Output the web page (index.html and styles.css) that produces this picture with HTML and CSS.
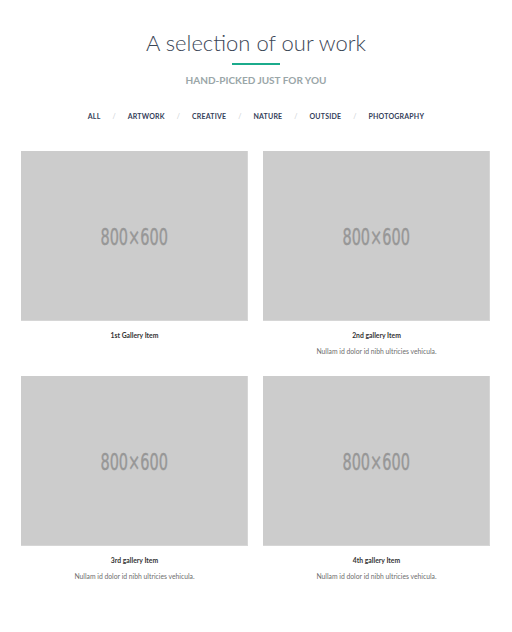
FILE: index.html
```html
<!DOCTYPE html>
<html>
<head>
<meta charset="utf-8">
<link rel="stylesheet" href="styles.css">
</head>
<body>
<section class="work">
  <header class="head">
    <h1 class="title">A selection of our work</h1>
    <div class="rule"></div>
    <p class="sub">HAND-PICKED JUST FOR YOU</p>
  </header>
  <nav class="filters">
    <a class="f">ALL</a><span class="sep">/</span>
    <a class="f">ARTWORK</a><span class="sep">/</span>
    <a class="f">CREATIVE</a><span class="sep">/</span>
    <a class="f">NATURE</a><span class="sep">/</span>
    <a class="f">OUTSIDE</a><span class="sep">/</span>
    <a class="f">PHOTOGRAPHY</a>
  </nav>
  <div class="grid">
    <figure class="item">
      <div class="ph"><span>800×600</span></div>
      <h3 class="it">1st Gallery Item</h3>
    </figure>
    <figure class="item">
      <div class="ph"><span>800×600</span></div>
      <h3 class="it">2nd gallery Item</h3>
      <p class="desc">Nullam id dolor id nibh ultricies vehicula.</p>
    </figure>
    <figure class="item">
      <div class="ph"><span>800×600</span></div>
      <h3 class="it">3rd gallery Item</h3>
      <p class="desc">Nullam id dolor id nibh ultricies vehicula.</p>
    </figure>
    <figure class="item">
      <div class="ph"><span>800×600</span></div>
      <h3 class="it">4th gallery Item</h3>
      <p class="desc">Nullam id dolor id nibh ultricies vehicula.</p>
    </figure>
  </div>
</section>
</body>
</html>
```
FILE: styles.css
```css
* { box-sizing: border-box; }
html, body { margin: 0; padding: 0; background: #fff; }
body { font-family: Lato, "Open Sans", sans-serif; color: #2c3e50; }
.work { padding: 29px 21px 0 21px; }
.head { display: flex; flex-direction: column; align-items: center; }
.title {
  margin: 0;
  font-weight: 300;
  font-size: 22px;
  line-height: 28px;
  color: #3b4656;
}
.rule { width: 48px; height: 2px; background: #1bab8c; margin-top: 6px; }
.sub {
  margin: 8px 0 0 0;
  font-size: 10px;
  line-height: 14px;
  font-weight: 700;
  color: #9aa6a8;
}
.filters {
  display: flex;
  justify-content: center;
  align-items: center;
  margin-top: 24px;
  font-size: 7px;
  font-weight: 700;
  line-height: 10px;
}
.f { color: #34405a; letter-spacing: 0.2px; }
.sep { color: #c8cdd2; font-weight: 400; margin: 0 12px; }
.grid {
  display: grid;
  grid-template-columns: 227px 227px;
  column-gap: 15px;
  margin-top: 30px;
}
.item { margin: 0; height: 225px; text-align: center; }
.ph {
  height: 170px;
  background: #cccccc;
  display: flex;
  align-items: center;
  justify-content: center;
  border-right: 1px solid #d6d6d6;
  border-bottom: 1px solid #d6d6d6;
}
.ph span {
  font-family: "DejaVu Sans Condensed", "Liberation Sans Narrow", sans-serif;
  font-size: 23px;
  color: #979797;
  font-weight: 400;
  -webkit-text-stroke: 0.4px #979797;
  transform: scaleX(0.7);
  display: inline-block;
  margin-top: 2px;
}
.it { margin: 9px 0 0 0; font-size: 6.8px; line-height: 10px; font-weight: 700; color: #333; }
.desc { margin: 6px 0 0 0; font-size: 6.8px; line-height: 10px; color: #6e6e6e; }
```
